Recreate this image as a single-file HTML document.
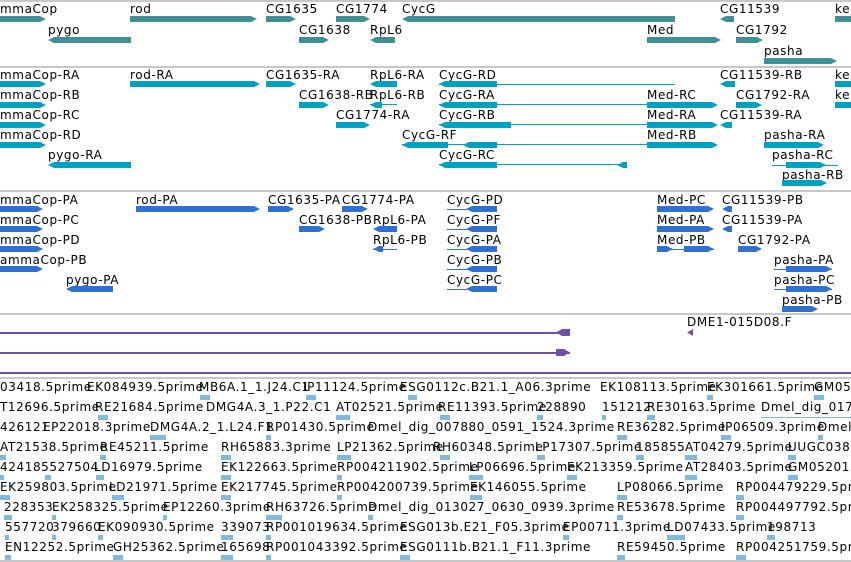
<!DOCTYPE html>
<html><head><meta charset="utf-8"><style>
html,body{margin:0;padding:0;background:#fff;width:851px;height:562px;overflow:hidden;position:relative}
div{position:absolute}
.t{font-family:"DejaVu Sans","Liberation Sans",sans-serif;font-size:12px;line-height:14px;color:#000;letter-spacing:0.6px;white-space:nowrap}
.g{background:#3f9095;height:6px}
.c{background:#00a0c0;height:6px}
.cl{background:#00a0c0;height:1px}
.p{background:#3070d0;height:6px}
.pl{background:#3070d0;height:1px}
.e{background:#80b8e0;height:5px}
.sep{left:0;width:851px;height:2px;background:#c8c8c8}
.pu{background:#7050a8;height:2px}
.R{clip-path:polygon(0 0,calc(100% - 6px) 0,100% 50%,calc(100% - 6px) 100%,0 100%)}
.L{clip-path:polygon(6px 0,100% 0,100% 100%,6px 100%,0 50%)}
</style></head><body>
<div class="sep" style="top:0"></div>
<div class="t" style="left:0;top:2px">mmaCop</div><div class="g R" style="left:0;top:16px;width:46px"></div>
<div class="t" style="left:130px;top:2px">rod</div><div class="g R" style="left:130px;top:16px;width:127px"></div>
<div class="t" style="left:266px;top:2px">CG1635</div><div class="g R" style="left:266px;top:16px;width:30px"></div>
<div class="t" style="left:336px;top:2px">CG1774</div><div class="g R" style="left:336px;top:16px;width:34px"></div>
<div class="t" style="left:402px;top:2px">CycG</div><div class="g L" style="left:402px;top:16px;width:273px"></div>
<div class="t" style="left:720px;top:2px">CG11539</div><div class="g L" style="left:720px;top:16px;width:14px"></div>
<div class="t" style="left:835px;top:2px">kel</div><div class="g" style="left:835px;top:16px;width:16px"></div>
<div class="t" style="left:48px;top:23px">pygo</div><div class="g L" style="left:48px;top:37px;width:83px"></div>
<div class="t" style="left:299px;top:23px">CG1638</div><div class="g R" style="left:299px;top:37px;width:30px"></div>
<div class="t" style="left:370px;top:23px">RpL6</div><div class="g L" style="left:370px;top:37px;width:25px"></div>
<div class="t" style="left:647px;top:23px">Med</div><div class="g R" style="left:647px;top:37px;width:74px"></div>
<div class="t" style="left:736px;top:23px">CG1792</div><div class="g R" style="left:736px;top:37px;width:27px"></div>
<div class="t" style="left:764px;top:44px">pasha</div><div class="g R" style="left:764px;top:58px;width:73px"></div>
<div class="sep" style="top:66px"></div>
<div class="t" style="left:0;top:68px">mmaCop-RA</div><div class="c R" style="left:0;top:81px;width:46px"></div>
<div class="t" style="left:0;top:88px">mmaCop-RB</div><div class="c R" style="left:0;top:102px;width:46px"></div>
<div class="t" style="left:0;top:108px">mmaCop-RC</div><div class="c R" style="left:0;top:122px;width:46px"></div>
<div class="t" style="left:0;top:128px">mmaCop-RD</div><div class="c R" style="left:0;top:142px;width:46px"></div>
<div class="t" style="left:48px;top:148px">pygo-RA</div><div class="c L" style="left:48px;top:162px;width:83px"></div>
<div class="t" style="left:130px;top:68px">rod-RA</div><div class="c R" style="left:130px;top:81px;width:130px"></div>
<div class="t" style="left:266px;top:68px">CG1635-RA</div><div class="c R" style="left:266px;top:81px;width:30px"></div>
<div class="t" style="left:299px;top:88px">CG1638-RB</div><div class="c R" style="left:299px;top:102px;width:30px"></div>
<div class="t" style="left:370px;top:68px">RpL6-RA</div><div class="c L" style="left:370px;top:81px;width:27px"></div>
<div class="t" style="left:370px;top:88px">RpL6-RB</div><div class="cl" style="left:370px;top:104px;width:27px"></div><div class="c L" style="left:370px;top:102px;width:12px"></div>
<div class="t" style="left:336px;top:108px">CG1774-RA</div><div class="c R" style="left:336px;top:122px;width:34px"></div>
<div class="t" style="left:439px;top:68px">CycG-RD</div><div class="cl" style="left:439px;top:84px;width:236px"></div><div class="c L" style="left:439px;top:81px;width:58px"></div>
<div class="t" style="left:439px;top:88px">CycG-RA</div><div class="cl" style="left:439px;top:104px;width:230px"></div><div class="c L" style="left:439px;top:102px;width:58px"></div>
<div class="t" style="left:439px;top:108px">CycG-RB</div><div class="cl" style="left:439px;top:124px;width:230px"></div><div class="c L" style="left:439px;top:122px;width:72px"></div>
<div class="t" style="left:402px;top:128px">CycG-RF</div><div class="cl" style="left:402px;top:144px;width:260px"></div><div class="c L" style="left:402px;top:142px;width:46px"></div><div class="c L" style="left:463px;top:142px;width:34px"></div>
<div class="t" style="left:439px;top:148px">CycG-RC</div><div class="cl" style="left:439px;top:164px;width:188px"></div><div class="c L" style="left:439px;top:162px;width:58px"></div><div class="c L" style="left:617px;top:162px;width:10px"></div>
<div class="t" style="left:647px;top:88px">Med-RC</div><div class="c R" style="left:647px;top:102px;width:71px"></div>
<div class="t" style="left:647px;top:108px">Med-RA</div><div class="c R" style="left:647px;top:122px;width:71px"></div>
<div class="t" style="left:647px;top:128px">Med-RB</div><div class="c R" style="left:647px;top:142px;width:71px"></div>
<div class="t" style="left:720px;top:68px">CG11539-RB</div><div class="c L" style="left:720px;top:81px;width:15px"></div>
<div class="t" style="left:736px;top:88px">CG1792-RA</div><div class="c R" style="left:736px;top:102px;width:26px"></div>
<div class="t" style="left:720px;top:108px">CG11539-RA</div><div class="c L" style="left:720px;top:122px;width:12px"></div>
<div class="t" style="left:835px;top:68px">kel</div><div class="c" style="left:835px;top:81px;width:16px"></div>
<div class="t" style="left:835px;top:88px">kel</div><div class="c" style="left:835px;top:102px;width:16px"></div>
<div class="t" style="left:764px;top:128px">pasha-RA</div><div class="c R" style="left:764px;top:142px;width:60px"></div>
<div class="t" style="left:772px;top:148px">pasha-RC</div><div class="cl" style="left:772px;top:165px;width:66px"></div><div class="c R" style="left:786px;top:162px;width:40px"></div>
<div class="t" style="left:782px;top:168px">pasha-RB</div><div class="c R" style="left:782px;top:180px;width:45px"></div>
<div class="sep" style="top:190px"></div>
<div class="t" style="left:0;top:193px">mmaCop-PA</div><div class="p R" style="left:0;top:206px;width:43px"></div>
<div class="t" style="left:0;top:213px">mmaCop-PC</div><div class="p R" style="left:0;top:226px;width:43px"></div>
<div class="t" style="left:0;top:233px">mmaCop-PD</div><div class="p R" style="left:0;top:246px;width:43px"></div>
<div class="t" style="left:0;top:253px">ammaCop-PB</div><div class="p R" style="left:0;top:266px;width:43px"></div>
<div class="t" style="left:66px;top:273px">pygo-PA</div><div class="p L" style="left:66px;top:286px;width:47px"></div>
<div class="t" style="left:136px;top:193px">rod-PA</div><div class="p R" style="left:136px;top:206px;width:124px"></div>
<div class="t" style="left:268px;top:193px">CG1635-PA</div><div class="p R" style="left:268px;top:206px;width:26px"></div>
<div class="t" style="left:342px;top:193px">CG1774-PA</div><div class="p R" style="left:342px;top:206px;width:26px"></div>
<div class="t" style="left:299px;top:213px">CG1638-PB</div><div class="p R" style="left:299px;top:226px;width:26px"></div>
<div class="t" style="left:373px;top:213px">RpL6-PA</div><div class="p L" style="left:373px;top:226px;width:24px"></div>
<div class="t" style="left:373px;top:233px">RpL6-PB</div><div class="pl" style="left:373px;top:249px;width:24px"></div><div class="p L" style="left:373px;top:246px;width:10px"></div>
<div class="t" style="left:447px;top:193px">CycG-PD</div><div class="pl" style="left:447px;top:209px;width:20px"></div><div class="p L" style="left:466px;top:206px;width:31px"></div>
<div class="t" style="left:447px;top:213px">CycG-PF</div><div class="pl" style="left:447px;top:229px;width:20px"></div><div class="p L" style="left:466px;top:226px;width:31px"></div>
<div class="t" style="left:447px;top:233px">CycG-PA</div><div class="pl" style="left:447px;top:249px;width:20px"></div><div class="p L" style="left:466px;top:246px;width:31px"></div>
<div class="t" style="left:447px;top:253px">CycG-PB</div><div class="pl" style="left:447px;top:269px;width:20px"></div><div class="p L" style="left:466px;top:266px;width:31px"></div>
<div class="t" style="left:447px;top:273px">CycG-PC</div><div class="pl" style="left:447px;top:289px;width:20px"></div><div class="p L" style="left:466px;top:286px;width:31px"></div>
<div class="t" style="left:657px;top:193px">Med-PC</div><div class="p R" style="left:657px;top:206px;width:57px"></div>
<div class="t" style="left:657px;top:213px">Med-PA</div><div class="p R" style="left:657px;top:226px;width:57px"></div>
<div class="t" style="left:657px;top:233px">Med-PB</div><div class="pl" style="left:657px;top:249px;width:57px"></div><div class="p R" style="left:657px;top:246px;width:16px"></div><div class="p R" style="left:684px;top:246px;width:30px"></div>
<div class="t" style="left:722px;top:193px">CG11539-PB</div><div class="p L" style="left:722px;top:206px;width:10px"></div>
<div class="t" style="left:722px;top:213px">CG11539-PA</div><div class="p L" style="left:722px;top:226px;width:10px"></div>
<div class="t" style="left:738px;top:233px">CG1792-PA</div><div class="p R" style="left:738px;top:246px;width:24px"></div>
<div class="t" style="left:774px;top:253px">pasha-PA</div><div class="pl" style="left:774px;top:269px;width:58px"></div><div class="p R" style="left:786px;top:266px;width:46px"></div>
<div class="t" style="left:774px;top:273px">pasha-PC</div><div class="pl" style="left:774px;top:289px;width:58px"></div><div class="p R" style="left:786px;top:286px;width:46px"></div>
<div class="t" style="left:782px;top:293px">pasha-PB</div><div class="p R" style="left:782px;top:306px;width:36px"></div>
<div class="sep" style="top:313px"></div>
<div class="pu" style="left:0;top:332px;width:570px"></div><div class="pu L" style="left:556px;top:329px;width:14px;height:7px"></div>
<div class="pu" style="left:0;top:352px;width:570px"></div><div class="pu R" style="left:556px;top:349px;width:14px;height:7px"></div>
<div class="t" style="left:687px;top:315px">DME1-015D08.F</div><div class="pu L" style="left:687px;top:329px;width:6px;height:7px"></div>
<div class="pu" style="left:0;top:372px;width:851px"></div>
<div class="sep" style="top:377px"></div>
<div class="sep" style="top:560px"></div>
<div class="t" style="left:0;top:380px">03418.5prime</div><div class="t" style="left:87px;top:380px">EK084939.5prime</div><div class="t" style="left:199px;top:380px">MB6A.1_1.J24.C1</div><div class="t" style="left:303px;top:380px">IP11124.5prime</div><div class="t" style="left:400px;top:380px">ESG0112c.B21.1_A06.3prime</div><div class="t" style="left:600px;top:380px">EK108113.5prime</div><div class="t" style="left:707px;top:380px">EK301661.5prime</div><div class="t" style="left:814px;top:380px">GM052</div>
<div class="t" style="left:0;top:400px">T12696.5prime</div><div class="t" style="left:95px;top:400px">RE21684.5prime</div><div class="t" style="left:206px;top:400px">DMG4A.3_1.P22.C1</div><div class="t" style="left:336px;top:400px">AT02521.5prime</div><div class="t" style="left:438px;top:400px">RE11393.5prime</div><div class="t" style="left:537px;top:400px">228890</div><div class="t" style="left:602px;top:400px">151212</div><div class="t" style="left:647px;top:400px">RE30163.5prime</div><div class="t" style="left:761px;top:400px">Dmel_dig_0176</div>
<div class="t" style="left:0;top:420px">426121</div><div class="t" style="left:43px;top:420px">EP22018.3prime</div><div class="t" style="left:150px;top:420px">DMG4A.2_1.L24.F1</div><div class="t" style="left:266px;top:420px">RP01430.5prime</div><div class="t" style="left:368px;top:420px">Dmel_dig_007880_0591_1524.3prime</div><div class="t" style="left:617px;top:420px">RE36282.5prime</div><div class="t" style="left:721px;top:420px">IP06509.3prime</div><div class="t" style="left:818px;top:420px">Dmel_dig_</div>
<div class="t" style="left:0;top:440px">AT21538.5prime</div><div class="t" style="left:100px;top:440px">RE45211.5prime</div><div class="t" style="left:221px;top:440px">RH65883.3prime</div><div class="t" style="left:337px;top:440px">LP21362.5prime</div><div class="t" style="left:433px;top:440px">RH60348.5prime</div><div class="t" style="left:535px;top:440px">LP17307.5prime</div><div class="t" style="left:636px;top:440px">185855</div><div class="t" style="left:685px;top:440px">AT04279.5prime</div><div class="t" style="left:788px;top:440px">UUGC0387</div>
<div class="t" style="left:0;top:460px">424185527504</div><div class="t" style="left:94px;top:460px">LD16979.5prime</div><div class="t" style="left:221px;top:460px">EK122663.5prime</div><div class="t" style="left:337px;top:460px">RP004211902.5prime</div><div class="t" style="left:469px;top:460px">LP06696.5prime</div><div class="t" style="left:567px;top:460px">EK213359.5prime</div><div class="t" style="left:685px;top:460px">AT28403.5prime</div><div class="t" style="left:788px;top:460px">GM05201.</div>
<div class="t" style="left:0;top:480px">EK259803.5prime</div><div class="t" style="left:109px;top:480px">LD21971.5prime</div><div class="t" style="left:221px;top:480px">EK217745.5prime</div><div class="t" style="left:337px;top:480px">RP004200739.5prime</div><div class="t" style="left:470px;top:480px">EK146055.5prime</div><div class="t" style="left:617px;top:480px">LP08066.5prime</div><div class="t" style="left:736px;top:480px">RP004479229.5pri</div>
<div class="t" style="left:4px;top:500px">228353</div><div class="t" style="left:52px;top:500px">EK258325.5prime</div><div class="t" style="left:163px;top:500px">EP12260.3prime</div><div class="t" style="left:266px;top:500px">RH63726.5prime</div><div class="t" style="left:368px;top:500px">Dmel_dig_013027_0630_0939.3prime</div><div class="t" style="left:617px;top:500px">RE53678.5prime</div><div class="t" style="left:736px;top:500px">RP004497792.5pri</div>
<div class="t" style="left:5px;top:520px">557720</div><div class="t" style="left:52px;top:520px">379660</div><div class="t" style="left:98px;top:520px">EK090930.5prime</div><div class="t" style="left:221px;top:520px">339073</div><div class="t" style="left:266px;top:520px">RP001019634.5prime</div><div class="t" style="left:400px;top:520px">ESG013b.E21_F05.3prime</div><div class="t" style="left:563px;top:520px">EP00711.3prime</div><div class="t" style="left:667px;top:520px">LD07433.5prime</div><div class="t" style="left:767px;top:520px">198713</div>
<div class="t" style="left:5px;top:540px">EN12252.5prime</div><div class="t" style="left:113px;top:540px">GH25362.5prime</div><div class="t" style="left:221px;top:540px">165698</div><div class="t" style="left:266px;top:540px">RP001043392.5prime</div><div class="t" style="left:400px;top:540px">ESG0111b.B21.1_F11.3prime</div><div class="t" style="left:617px;top:540px">RE59450.5prime</div><div class="t" style="left:736px;top:540px">RP004251759.5pri</div>
<div class="e" style="left:200px;top:395px;width:10px"></div><div class="e" style="left:306px;top:395px;width:10px"></div><div class="e" style="left:408px;top:395px;width:9px"></div><div class="e" style="left:707px;top:395px;width:6px"></div><div class="e" style="left:814px;top:395px;width:10px"></div>
<div class="e" style="left:98px;top:415px;width:10px"></div><div class="e" style="left:336px;top:415px;width:14px"></div><div class="e" style="left:440px;top:415px;width:10px"></div><div class="e" style="left:537px;top:415px;width:6px"></div><div class="e" style="left:602px;top:415px;width:4px"></div><div class="e" style="left:647px;top:415px;width:8px"></div><div class="cl" style="left:761px;top:417px;width:90px;background:#80b8e0"></div>
<div class="e" style="left:150px;top:435px;width:16px"></div><div class="e" style="left:266px;top:435px;width:5px"></div><div class="e" style="left:617px;top:435px;width:10px"></div><div class="e" style="left:721px;top:435px;width:10px"></div><div class="e" style="left:818px;top:435px;width:5px"></div>
<div class="e" style="left:0;top:455px;width:6px"></div><div class="e" style="left:100px;top:455px;width:6px"></div><div class="e" style="left:221px;top:455px;width:10px"></div><div class="e" style="left:337px;top:455px;width:14px"></div><div class="e" style="left:440px;top:455px;width:10px"></div><div class="e" style="left:537px;top:455px;width:8px"></div><div class="e" style="left:636px;top:455px;width:8px"></div><div class="e" style="left:685px;top:455px;width:12px"></div><div class="e" style="left:788px;top:455px;width:8px"></div>
<div class="e" style="left:0;top:475px;width:4px"></div><div class="e" style="left:45px;top:475px;width:6px"></div><div class="e" style="left:96px;top:475px;width:8px"></div><div class="e" style="left:221px;top:475px;width:10px"></div><div class="e" style="left:337px;top:475px;width:5px"></div><div class="e" style="left:469px;top:475px;width:14px"></div><div class="e" style="left:567px;top:475px;width:10px"></div><div class="e" style="left:685px;top:475px;width:12px"></div><div class="e" style="left:788px;top:475px;width:10px"></div>
<div class="e" style="left:0;top:495px;width:10px"></div><div class="e" style="left:112px;top:495px;width:12px"></div><div class="e" style="left:221px;top:495px;width:10px"></div><div class="e" style="left:337px;top:495px;width:5px"></div><div class="e" style="left:470px;top:495px;width:12px"></div><div class="e" style="left:617px;top:495px;width:10px"></div><div class="e" style="left:736px;top:495px;width:8px"></div>
<div class="e" style="left:4px;top:515px;width:8px"></div><div class="e" style="left:52px;top:515px;width:4px"></div><div class="e" style="left:163px;top:515px;width:4px"></div><div class="e" style="left:266px;top:515px;width:16px"></div><div class="e" style="left:368px;top:515px;width:5px"></div><div class="e" style="left:617px;top:515px;width:6px"></div><div class="e" style="left:736px;top:515px;width:8px"></div>
<div class="e" style="left:5px;top:535px;width:4px"></div><div class="e" style="left:52px;top:535px;width:4px"></div><div class="e" style="left:98px;top:535px;width:5px"></div><div class="e" style="left:221px;top:535px;width:12px"></div><div class="e" style="left:266px;top:535px;width:5px"></div><div class="e" style="left:563px;top:535px;width:6px"></div><div class="e" style="left:667px;top:535px;width:18px"></div><div class="e" style="left:767px;top:535px;width:8px"></div>
<div class="e" style="left:5px;top:555px;width:6px"></div><div class="e" style="left:113px;top:555px;width:10px"></div><div class="e" style="left:221px;top:555px;width:12px"></div><div class="e" style="left:266px;top:555px;width:5px"></div><div class="e" style="left:400px;top:555px;width:10px"></div><div class="e" style="left:617px;top:555px;width:8px"></div><div class="e" style="left:736px;top:555px;width:10px"></div>
</body></html>
